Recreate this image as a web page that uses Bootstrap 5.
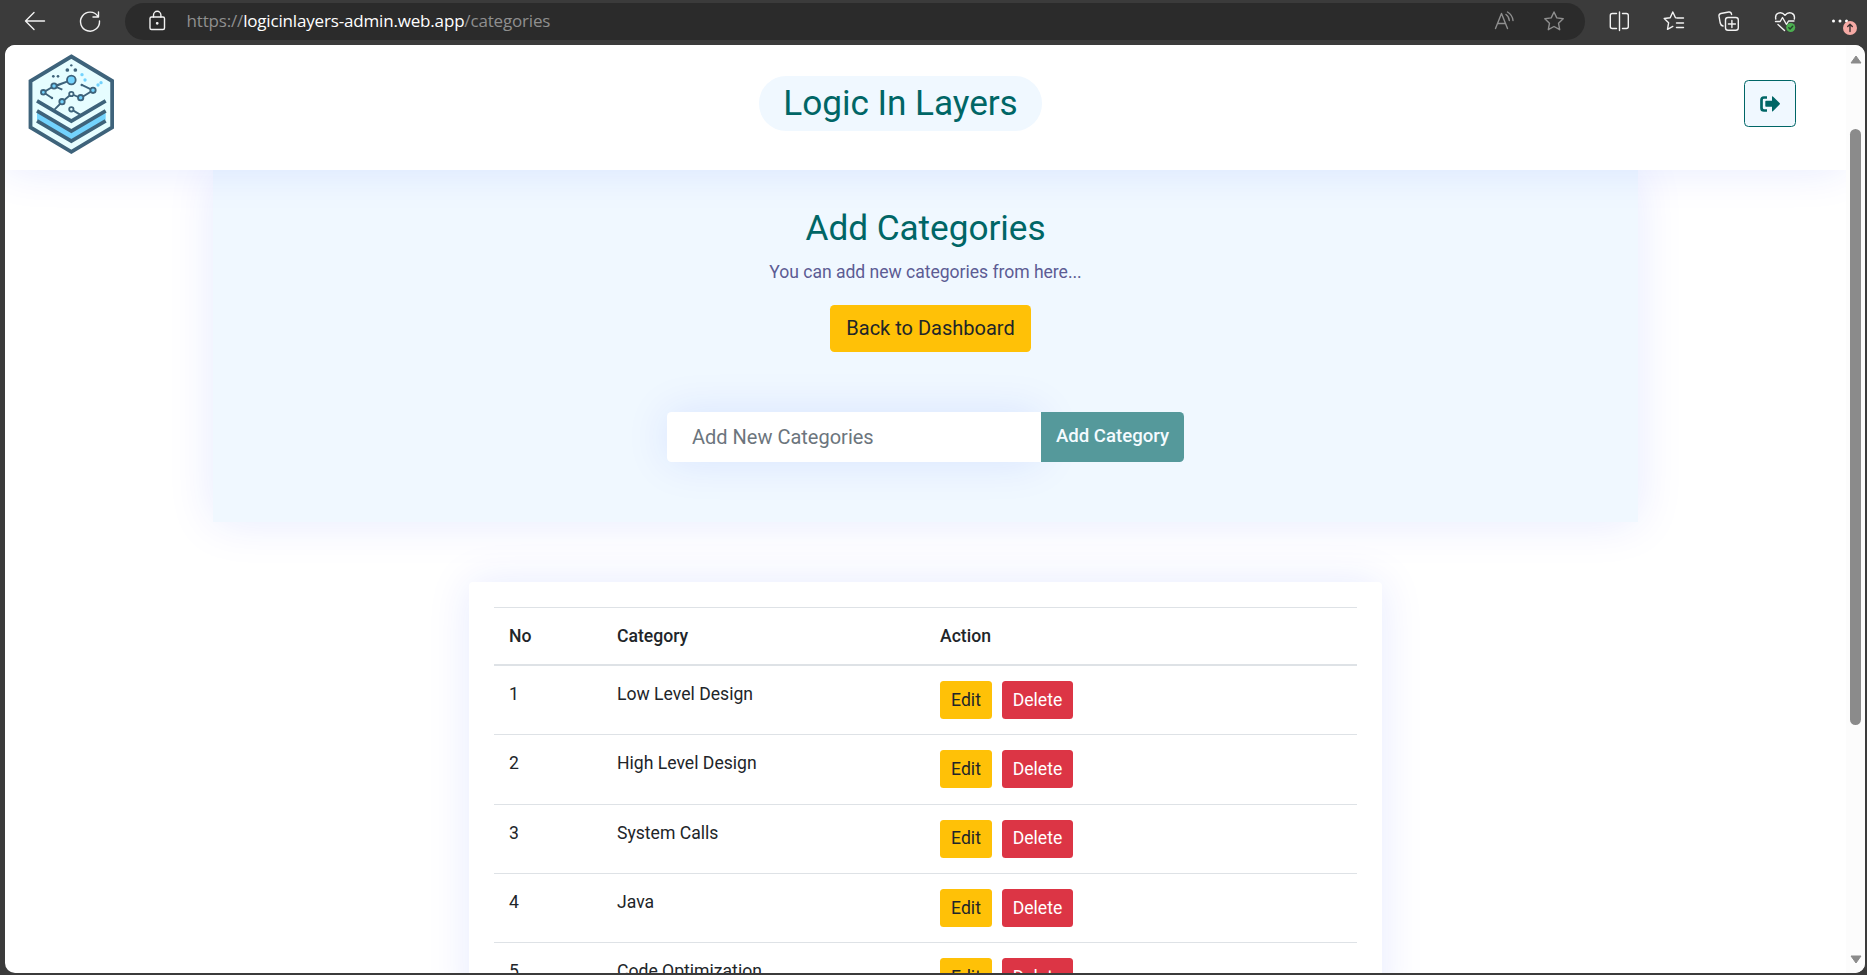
<!DOCTYPE html>
<html lang="en">
<head>
<meta charset="utf-8">
<meta name="viewport" content="width=device-width, initial-scale=1">
<title>Logic In Layers - Categories</title>
<link href="https://cdn.jsdelivr.net/npm/bootstrap@5.3.0/dist/css/bootstrap.min.css" rel="stylesheet">
<style>
  body { height: 975px; background: #3b3b3b; font-family: Roboto, sans-serif; font-size: 17.6px; line-height: 26.4px; color: #212529; }
  svg { display: block; flex: none; }
  .chrome-bar { height: 45px; padding: 0 15px 3px 22px; }
  .chrome-bar svg, .url-bar svg { width: 24px; height: 24px; fill: none; stroke: #f2f2f2; stroke-width: 1.4; stroke-linecap: round; stroke-linejoin: round; }
  .reload-icon { margin-left: 31px; }
  .url-bar { width: 1460px; height: 37px; margin: 0 22px 0 24px; padding: 0 19px 0 20px; background: #2b2b2b; }
  .url-bar .dim svg { stroke: #8f8f8f; }
  .read-icon { margin-right: 26px; }
  .url-text { font-family: "Open Sans", sans-serif; font-size: 17px; margin-left: 17.500px; color: #8f8f8f; white-space: nowrap; letter-spacing: -.17px; }
  .url-text b { font-weight: 400; color: #fff; }
  .chrome-gap { margin-right: 31.2px; }
  .alert-dot { right: -5.5px; bottom: -2px; }
  .chrome-bar .alert-dot { width: 14px; height: 14px; }
  .page-view { width: 1860px; height: 928px; margin-left: 5px; border-radius: 10px; background: #fff; }
  .app-header { height: 125px; padding: 9px 50px 0 22.5px; display: grid; grid-template-columns: 1fr auto 1fr; background: #fff; z-index: 2; }
  .soft-shadow { box-shadow: 0 0 44px rgba(0, 45, 255, .1); }
  .brand-pill { height: 55px; margin: 22px 0 0 -22.5px; padding: 0 24.5px; border-radius: 27px; background: #f0f8ff; color: #006666; font-size: 35.2px; line-height: 55px; letter-spacing: -.05px; white-space: nowrap; font-weight: 400; }
  .exit-btn { width: 52px; height: 47px; margin-top: 26px; border: 1px solid #006666; border-radius: 4.5px; background: #f0f8ff; }
  .hero { width: 1425px; height: 352px; background: #f0f8ff; padding-top: 37px; }
  .hero h2 { color: #006666; font-size: 35.2px; line-height: 43px; letter-spacing: -.05px; margin-bottom: 9px; font-weight: 400; }
  .hero p { color: #5c5c94; line-height: 26px; margin-bottom: 20px; letter-spacing: -.04px; }
  .btn { --bs-btn-border-width: 0; }
  .back-btn { width: 201px; height: 47px; margin-left: 10px; font-size: 20px; border-radius: 4.5px; background: #ffc107; color: #212529; padding: 0 0 2px; }
  .add-group { width: 517px; height: 50px; margin-top: 60px; }
  .add-group .form-control { width: 374px; flex: none; border: 0; border-radius: 4.5px 0 0 4.5px; padding: 0 25px; font-size: 20px; }
  .add-group .form-control::placeholder { color: #6c757d; opacity: 1; }
  .add-btn { flex: 1; border-radius: 0 4.5px 4.5px 0; background: #55999b; color: #f4fbff; font-weight: 500; font-size: 18.600px; padding: 0; }
  .list-card { width: 913px; margin-top: 60px; padding: 25px 25px 0; border-radius: 4px; background: #fff; }
  .cat-table { table-layout: fixed; margin: 0; color: #212529; border-color: #dee2e6; --bs-table-bg: transparent; }
  .cat-table > :not(caption) > * > * { padding: 15px; border-bottom: 0; border-top: 1px solid #dee2e6; vertical-align: top; color: #212529; }
  .cat-table > thead > tr > th { font-weight: 500; border-bottom: 2px solid #dee2e6; }
  .cat-table > tbody > tr:first-child > td { border-top: 0; }
  .cat-table > tbody > tr > td { height: 69.4px; padding-bottom: 0; }
  .col-no { width: 108px; } .col-name { width: 323px; }
  .row-btn { height: 38px; border-radius: 3.5px; padding: 0; font-size: 17.6px; display: block; }
  .edit-btn { width: 52px; background: #ffc107; color: #212529; }
  .del-btn { width: 71px; margin-left: 10px; background: #dc3545; color: #fff; }
  .scroll-rail { width: 19px; background: #fcfcfc; padding: 10px 3px 9px 4px; z-index: 3; }
  .scroll-thumb { width: 11px; height: 596px; margin-top: 65px; border-radius: 6px; background: #8b8b8b; }
</style>
</head>
<body class="overflow-hidden">
<div class="chrome-bar d-flex align-items-center">
  <svg viewBox="0 0 24 24"><path d="M22.500 12H3.500M12 3.500 3.500 12l8.500 8.500"/></svg>
  <svg class="reload-icon" viewBox="0 0 24 24"><path d="M21 7.500A9.500 9.500 0 1 0 22.500 12M21.500 3v5h-5.500"/></svg>
  <div class="url-bar rounded-pill d-flex align-items-center">
    <svg viewBox="0 0 24 24"><rect x="5" y="8" width="14.500" height="12.500" rx="1.500"/><path d="M8.500 8V6a3.700 3.700 0 0 1 7.400 0v2"/><circle cx="12.200" cy="14.300" r=".7" fill="#fff"/></svg>
    <div class="url-text">https://<b>logicinlayers-admin.web.app</b>/categories</div>
    <div class="dim d-flex ms-auto">
      <svg class="read-icon" viewBox="0 0 24 24"><path d="M3.500 19.500 9.500 4.500l6 15M5.500 14.500h8M14 5.500q3 2 3.300 6M15.500 3q5 3 5.500 8.500"/></svg>
      <svg viewBox="0 0 24 24"><path d="m12 3 2.800 5.900 6.400.8-4.700 4.500 1.200 6.500L12 17.500l-5.700 3.200 1.200-6.500L2.800 9.700l6.400-.8z"/></svg>
    </div>
  </div>
  <svg class="chrome-gap" viewBox="0 0 24 24"><path d="M12.500 3v18.500M9.500 4.500H5.300a2 2 0 0 0-2 2v11a2 2 0 0 0 2 2h4.200M15.500 4.500H19.300a2 2 0 0 1 2 2v11a2 2 0 0 1-2 2h-3.800"/></svg>
  <svg class="chrome-gap" viewBox="0 0 24 24"><path d="M14 8.900 13.500 8.700 10.800 3 8.200 8.700l-6 .8 4.400 4.300-1.100 6.500 5.300-2.900M15 9h6.500M14.500 14h7M14.500 18.500h7"/></svg>
  <svg class="chrome-gap" viewBox="0 0 24 24"><rect x="8.500" y="8.500" width="12.800" height="12.800" rx="2.500"/><path d="M14.900 11.500v7M11.400 15h7M6 17c-2-.5-2.500-1.500-2.800-3L2 7.200c-.2-1.500.3-2.400 1.800-2.700l8-1.500c1.500-.2 2.500.5 2.800 2.500"/></svg>
  <svg class="chrome-gap" viewBox="0 0 24 24"><path d="M2.800 10C1.500 4 8 1.500 12 6.300 16 1.500 22.500 4 21.300 10M2.500 12.500h4.700L9.500 8.500l4 7 2-3.500h5.500M5 15.500l6.500 6"/><circle cx="17.700" cy="18.500" r="4.500" fill="#4caf50" stroke="none"/><path d="m15.800 18.700 1.300 1.300 2.600-2.800" stroke="#24442a"/></svg>
  <div class="position-relative">
    <svg viewBox="0 0 24 24"><g fill="#fff" stroke="none"><circle cx="5.500" cy="12" r="1.500"/><circle cx="12" cy="12" r="1.500"/><circle cx="18.500" cy="12" r="1.500"/></g></svg>
    <svg class="alert-dot position-absolute" viewBox="0 0 14 14"><circle cx="7" cy="7" r="7" fill="#f5aaa5" stroke="none"/><path d="M7 10.500v-7M4.700 5.500 7 3.300l2.300 2.200" stroke="#3b3030"/></svg>
  </div>
</div>

<div class="page-view d-flex overflow-hidden">
  <main class="flex-grow-1 overflow-hidden">
    <header class="app-header soft-shadow position-relative">
      <svg width="86.700" height="100.700" viewBox="38 26 260 302">
        <path d="M168 33.500 290.500 107v139L168 319.500 45.500 246V107z" fill="#e6fdff" stroke="#3e637b" stroke-width="11.500"/>
        <path d="m65 200 103 61 103-61v23l-103 61L65 223z" fill="#73d3fd"/>
        <g fill="none" stroke="#3e637b" stroke-width="11"><path d="m65 166.500 103 61 103-61M65 196.500l103 61 103-61M65 226.500l103 60.500 103-60.500"/></g>
        <g fill="none" stroke="#3e637b" stroke-width="5.500"><path d="m84 141 32-19 52-18M84 141l26 17M116 122l25 11M168 104l-50 20M118 192l22-22 28-24 28 12 37-23-35-17M168 192l30 18"/></g>
        <g fill="#73d3fd" stroke="#3e637b" stroke-width="5.500"><circle cx="168" cy="104" r="13"/><circle cx="116" cy="122" r="8"/><circle cx="84" cy="141" r="7"/><circle cx="140" cy="169" r="8"/><circle cx="196" cy="157" r="8"/><circle cx="233" cy="135" r="8"/><circle cx="168" cy="146" r="6.500" fill="#e6fdff"/><circle cx="168" cy="192" r="6.500" fill="#e6fdff"/></g>
        <g fill="#3e637b"><circle cx="168" cy="60" r="3.500"/><circle cx="156" cy="74" r="5.500"/><circle cx="180" cy="74" r="5.500"/><circle cx="114" cy="93" r="4"/><circle cx="128" cy="93" r="4"/><circle cx="199" cy="119" r="3.500"/><circle cx="110" cy="158" r="3.500"/></g>
        <g fill="#73d3fd"><circle cx="200" cy="88" r="5"/><circle cx="209" cy="104" r="5"/><circle cx="248" cy="119" r="5"/><circle cx="257" cy="112" r="5"/></g>
      </svg>
      <h2 class="brand-pill">Logic In Layers</h2>
      <a class="exit-btn ms-auto d-flex align-items-center justify-content-center">
        <svg width="20" height="16" viewBox="0 0 20 16"><path d="M7 1.500H4A2.500 2.500 0 0 0 1.500 4v8A2.500 2.500 0 0 0 4 14.500h3" fill="none" stroke="#006666" stroke-width="2.700"/><path d="M6 4.800h6V.8q0-1 .9-.3l6.700 6.600q.7.700 0 1.400l-6.700 6.800q-.9.700-.9-.5v-4H6q-.7 0-.7-.7V5.500q0-.7.700-.7z" fill="#006666"/></svg>
      </a>
    </header>

    <section class="hero soft-shadow mx-auto text-center">
      <h2>Add Categories</h2>
      <p>You can add new categories from here...</p>
      <button class="btn back-btn">Back to Dashboard</button>
      <div class="add-group d-flex mx-auto">
        <input class="form-control soft-shadow" placeholder="Add New Categories">
        <button class="btn add-btn">Add Category</button>
      </div>
    </section>

    <section class="list-card soft-shadow mx-auto">
      <table class="table cat-table">
        <colgroup><col class="col-no"><col class="col-name"><col></colgroup>
        <thead><tr><th>No</th><th>Category</th><th>Action</th></tr></thead>
        <tbody>
          <tr><td>1</td><td>Low Level Design</td><td><div class="d-flex"><button class="btn row-btn edit-btn">Edit</button><button class="btn row-btn del-btn">Delete</button></div></td></tr>
          <tr><td>2</td><td>High Level Design</td><td><div class="d-flex"><button class="btn row-btn edit-btn">Edit</button><button class="btn row-btn del-btn">Delete</button></div></td></tr>
          <tr><td>3</td><td>System Calls</td><td><div class="d-flex"><button class="btn row-btn edit-btn">Edit</button><button class="btn row-btn del-btn">Delete</button></div></td></tr>
          <tr><td>4</td><td>Java</td><td><div class="d-flex"><button class="btn row-btn edit-btn">Edit</button><button class="btn row-btn del-btn">Delete</button></div></td></tr>
          <tr><td>5</td><td>Code Optimization</td><td><div class="d-flex"><button class="btn row-btn edit-btn">Edit</button><button class="btn row-btn del-btn">Delete</button></div></td></tr>
        </tbody>
      </table>
    </section>
  </main>
  <div class="scroll-rail d-flex flex-column">
    <svg width="12" height="9" viewBox="0 0 12 9"><path d="M6 1 11 8H1z" fill="#8b8b8b" stroke="#8b8b8b" stroke-linejoin="round"/></svg>
    <div class="scroll-thumb"></div>
    <svg class="mt-auto" width="12" height="9" viewBox="0 0 12 9"><path d="M1 1h10L6 8z" fill="#8b8b8b" stroke="#8b8b8b" stroke-linejoin="round"/></svg>
  </div>
</div>
<script src="https://cdn.jsdelivr.net/npm/bootstrap@5.3.0/dist/js/bootstrap.bundle.min.js"></script>
</body>
</html>
